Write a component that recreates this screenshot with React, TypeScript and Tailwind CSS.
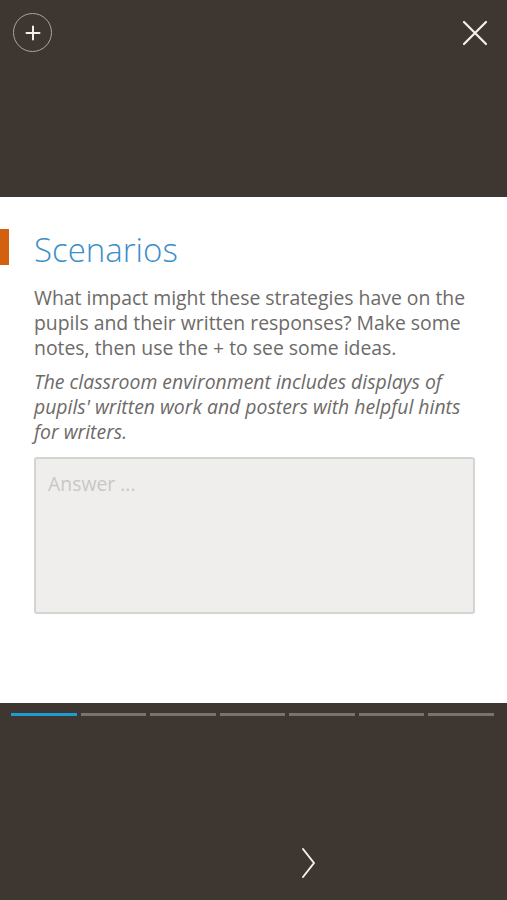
import React from "react";

export default function App() {
  const segs = [0, 1, 2, 3, 4, 5, 6];
  return (
    <div className="w-[507px] h-[900px] flex flex-col bg-[#3e3731]" style={{ fontFamily: '"Open Sans", "Noto Sans", sans-serif' }}>
      <div className="h-[197px] relative">
        <div className="absolute left-[13px] top-[13px] w-[39px] h-[39px] rounded-full border-[1.5px] border-[#aaa49e] flex items-center justify-center">
          <svg width="16" height="16" viewBox="0 0 16 16">
            <path d="M8 1.5 V14.5 M1.5 8 H14.5" stroke="#f4f1ec" strokeWidth="2" strokeLinecap="round" />
          </svg>
        </div>
        <div className="absolute left-[461px] top-[19px]">
          <svg width="28" height="28" viewBox="0 0 28 28">
            <path d="M3 3 L25 25 M25 3 L3 25" stroke="#f4f1ec" strokeWidth="2.2" strokeLinecap="round" />
          </svg>
        </div>
      </div>
      <div className="h-[506px] bg-white flex flex-col pt-[33px]">
        <div className="flex items-center h-[40px]">
          <div className="w-[9px] h-[36px] bg-[#d3600f] -mt-[6px]" />
          <h1 className="ml-[25px] text-[33px] leading-[40px] font-light text-[#3c8ec9]">Scenarios</h1>
        </div>
        <p className="mt-[15px] ml-[34px] text-[19.4px] leading-[25px] text-[#6d6a68] whitespace-nowrap">
          What impact might these strategies have on the
          <br />
          pupils and their written responses? Make some
          <br />
          notes, then use the + to see some ideas.
        </p>
        <p className="mt-[9px] ml-[34px] text-[19.4px] leading-[25px] italic text-[#6d6a68] whitespace-nowrap">
          The classroom environment includes displays of
          <br />
          pupils' written work and posters with helpful hints
          <br />
          for writers.
        </p>
        <div className="mt-[13px] ml-[34px] w-[441px] h-[157px] bg-[#efeeec] border-2 border-[#d6d4d1] rounded-[3px] px-[12px] pt-[12px]">
          <span className="text-[19.4px] leading-[25px] text-[#c9c7c5]">Answer ...</span>
        </div>
      </div>
      <div className="flex gap-[4px] pl-[11px] pr-[13px] pt-[10px]">
        {segs.map((i) => (
          <div key={i} className={i === 0 ? "flex-1 h-[3px] bg-[#1f9bd1]" : "flex-1 h-[3px] bg-[#7a736d]"} />
        ))}
      </div>
      <div className="flex-1 flex justify-center items-start pt-[131px] pl-[111px]">
        <svg width="16" height="32" viewBox="0 0 16 32">
          <path d="M2 2 L13 16 L2 30" stroke="#f4f1ec" strokeWidth="2" fill="none" strokeLinecap="round" strokeLinejoin="round" />
        </svg>
      </div>
    </div>
  );
}
